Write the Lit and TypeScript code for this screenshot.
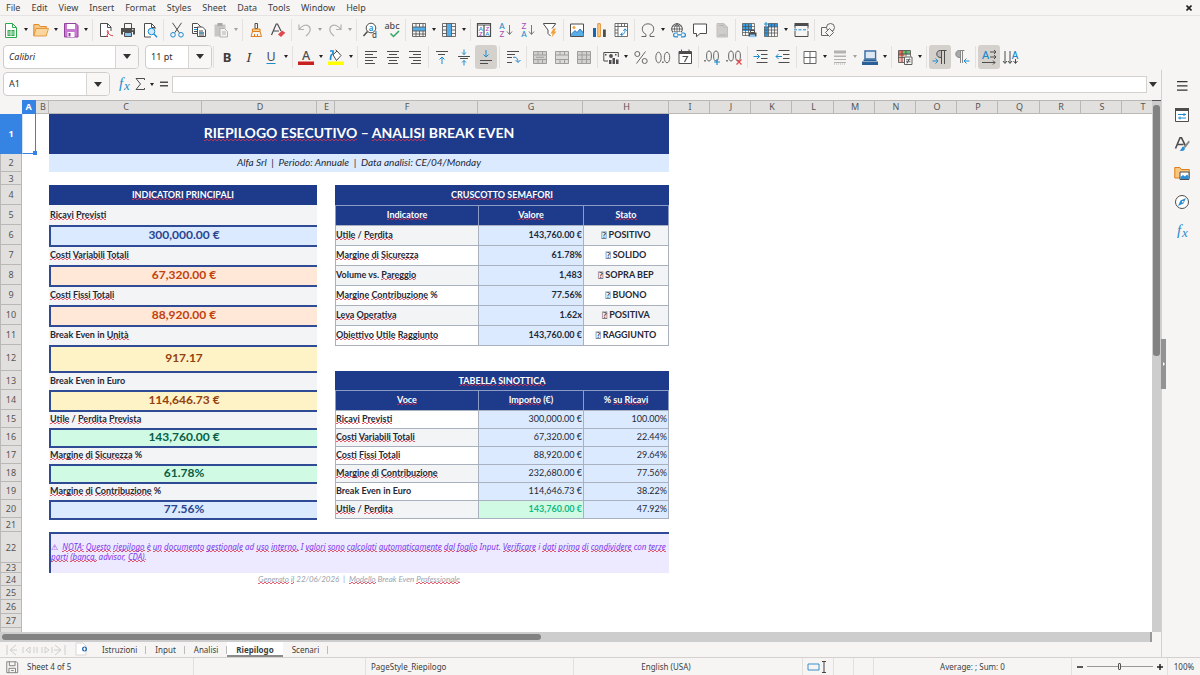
import { LitElement, html, svg, css, nothing } from "lit";
import { customElement, property } from "lit/decorators.js";
import { classMap } from "lit/directives/class-map.js";

const K = "#4d4d4d";
const B = "#1e8bcd";
const G = "#b4b2b0";

const line = (d: string, c = K, w = 1) =>
  svg`<path d=${d} fill="none" stroke=${c} stroke-width=${w}></path>`;
const fill = (d: string, c = K) => svg`<path d=${d} fill=${c}></path>`;
const glyph = (t: string, x: number, y: number, size: number, c = K, weight = 400, family = "Noto Sans", style = "normal") =>
  svg`<text x=${x} y=${y} font-size=${size} fill=${c} font-weight=${weight} font-style=${style} font-family=${family + ", sans-serif"} text-anchor="middle">${t}</text>`;

const icons: Record<string, unknown> = {
  new: [fill("M2.500 1.500h7l4 4v10h-11z", "#fff"), line("M2.500 1.500h7l4 4v10h-11zM9.500 1.500v4h4", "#2fa84f"), fill("M4.500 8h7v6h-7z", "#35a853"), line("M5 10h6M5 12h6M8 8v6", "#fff", 0.7)],
  open: [fill("M.8 14V2.500h5l1.500 2h6.500V14z", "#f7c67f"), line("M.8 14V2.500h5l1.500 2h6V6", "#e08a2c"), fill("M3 6.500h12.700L13.200 14H.8z", "#fbd69c"), line("M3 6.500h12.500L13.200 14H.8z", "#e08a2c", 0.8)],
  save: [fill("M1.500 1.500h11.500l2 2v11.500H1.500z", "#c77ad0"), line("M1.500 1.500h11.500l2 2v11.500H1.500z", "#91429c"), fill("M4 2h8v5H4zM4.500 10h7v5h-7z", "#fff"), fill("M5.500 11h2v3.500h-2z", "#91429c")],
  pdf: [fill("M2.500.8h7l4 4v10.700h-11z", "#fff"), line("M10 14.500H2.500V1.500h7l3.500 3.500v4M9.500 1.500v4H13"), line("M8 15c2-2 3-6 1.800-6.500S9 13 15 13.800", "#dd3c44")],
  print: [line("M4.500 6V1.500h7V6"), fill("M1 6h14v6.500h-2V10H3v2.500H1z", K), line("M4.500 10.500h7v4h-7z"), fill("M5 11h6v3H5z", "#8ec6ef"), fill("M12 7.200h1.500v1H12z", "#fff")],
  preview: [fill("M2.500.8h7l4 4v10.700h-11z", "#fff"), line("M9 15H2.500V1.500h7l3.500 3.500v2M9.500 1.500v4H13"), svg`<circle cx="9.500" cy="9.500" r="3.300" fill="#cfe8fa" stroke=${B}></circle>`, line("M12 12l3 3.300", B, 1.400)],
  cut: [line("M3.500.8l6.800 10M12.500.8l-6.800 10"), svg`<circle cx="4" cy="12.800" r="2.300" fill="none" stroke=${B}></circle><circle cx="12" cy="12.800" r="2.300" fill="none" stroke=${B}></circle>`],
  copy: [fill("M1.500 1.500h5l3 3v7h-8z", "#fff"), line("M1.500 1.500h5l3 3v7h-8zM3 5.500h4M3 7.500h4M3 9.500h3"), fill("M6.500 5h5l3.500 3.500v6.500H6.500z", "#fff"), line("M6.500 5h5l3 3v6.500h-8zM8 9h4M8 11h5M8 13h5"), line("M3 7.500h3M8 11h5", B)],
  paste: [fill("M1.500 2.500h11v12h-11z", "#c8c6c4"), fill("M4.500 1h5v3h-5z", "#a9a7a5"), fill("M7 6.500h5l3 3V15H7z", "#f4f3f2"), line("M7 6.500h4.500l3 3V15H7zM9 10h4M9 12h4", G)],
  clone: [line("M7 1.500h2.500v5H7z", K), fill("M3.500 7h9v3h-9z", "#fbd69c"), line("M4.500 7h7.500v2.500h-7.500zM4.500 9.500L3 14.500h10.500L12 9.500M6.500 14v-2M9.500 14v-2", "#df7f1f")],
  clear: [line("M1.500 13L6.200 2h1.300L11 9M3.500 9h5.500", K, 1.200), fill("M8 12.500l4-4 3.300 2.200-4.300 4.300z", "#e2474b")],
  undo: [line("M2 2.500v5h5M2.500 7C5 3.500 9 2.300 11.500 4c3.300 2.500 1.500 7-2.500 10", G, 1.200)],
  redo: [line("M14 2.500v5H9M13.500 7C11 3.500 7 2.300 4.500 4c-3.300 2.500-1.500 7 2.500 10", G, 1.200)],
  find: [svg`<circle cx="9" cy="6" r="4.800" fill="#fff" stroke=${K}></circle>`, line("M5.500 9.500L1.500 14", K, 1.500), glyph("a", 9, 8.500, 8, B, 600), glyph("d", 12.500, 15.500, 8, K, 500)],
  spell: [glyph("abc", 8, 7, 9, K, 500), line("M6.500 11.500l3 3L15 9", "#2fa865", 1.500)],
  row: [fill("M1.500 5h13v4h-13z", "#55aeea"), line("M1.500 1.500h13v13h-13zM1.500 5h13M1.500 9h13M1.500 12h13M5 1.500V5M8.500 1.500V5M12 1.500V5M5 9v5.500M8.500 9v5.500M12 9v5.500", K, 0.8)],
  col: [fill("M5.500 1.500h5v13h-5z", "#55aeea"), line("M1.500 1.500h13v13h-13zM5.500 1.500v13M10.500 1.500v13M1.500 4.500h4M1.500 8h4M1.500 11.500h4M10.500 4.500h4M10.500 8h4M10.500 11.500h4", K, 0.8)],
  sort: [fill("M1 1h14v14H1z", "#fff"), line("M1.500 1.500h13v13h-13zM8 3v12M1.500 3h13", K, 1.200), glyph("A", 4.800, 8.800, 6, B, 600, "Lato"), glyph("Z", 4.800, 14.300, 6, "#a94fb5", 600, "Lato"), glyph("Z", 11.300, 8.800, 6, "#a94fb5", 600, "Lato"), glyph("A", 11.300, 14.300, 6, B, 600, "Lato")],
  az: [glyph("A", 4, 7, 8, B, 500, "Lato"), glyph("Z", 4, 15, 8, "#a94fb5", 500, "Lato"), line("M11.500 3v9M9 9.500l2.500 3 2.500-3", "#777")],
  za: [glyph("Z", 4, 7, 8, "#a94fb5", 500, "Lato"), glyph("A", 4, 15, 8, B, 500, "Lato"), line("M11.500 3v9M9 9.500l2.500 3 2.500-3", "#777")],
  filter: [fill("M1.500 1.500h12L9.500 8v6.500l-3.500-3V8z", "#fff"), line("M8.500 14l-2.500-2.500V8L1.500 2v-.5h12V2L10 6.500"), fill("M11.500 6.500l-3 5h2.200L9.500 15.500l5-6h-2.200l1.700-3z", "#f3a13c")],
  image: [fill("M1 2h14v12.500H1z", "#fff"), line("M1.500 2h13v12.500h-13z"), svg`<circle cx="5" cy="5.500" r="1.500" fill="#f3a13c"></circle>`, fill("M2 14v-1.500l4-4 2 2L11 7l3.500 4V14z", "#5aaee8"), line("M2 12.500l4-4 2 2L11 7l3.500 4", "#1565b5", 0.8)],
  chart: [fill("M2 6h3v9H2z", "#1565b5"), fill("M7 2h2.500v13H7z", "#fbd69c"), line("M6.800 1.700h2.500v13H6.800z", "#e08a2c"), fill("M12 7.500h2.800V15H12z", K)],
  pivot: [fill("M2 1h13v14H2z", "#fff"), line("M2 1.500h12.500v13H2zM2 4.500h12.500M5 1.500v13M8.500 1.500v3M11.500 1.500v3M2 8h3M2 11h3", K, 0.8), line("M8 12.500c3.500 0 4-2 4-5M10.300 8.800L12 6.800l1.700 2M9.500 10.800l-2 1.700 2 1.500", B)],
  omega: [line("M1.500 14.500H6v-2C3.300 11 2.300 9 2.300 6.800 2.300 4 4.500 1.800 8 1.800s5.700 2.200 5.700 5c0 2.200-1 4.200-3.700 5.700v2h4.500", "#666", 1)],
  link: [svg`<circle cx="7" cy="7" r="5.300" fill="#fff" stroke=${K}></circle>`, line("M1.700 7h10.600M7 1.700v10.600M7 1.700c-3.500 3-3.500 7.600 0 10.600M7 1.700c3.500 3 3.500 7.600 0 10.600M2.500 4h9M2.500 10h9", K, 0.8), fill("M3 10h13v6H3z", "#f6f5f4"), line("M8 11H5.500a1.800 1.800 0 000 3.800H8M11 11h2.500a1.800 1.800 0 010 3.800H11M7 12.900h5", B, 1.200)],
  comment: [fill("M1.500 2h13v9.500H8l-3.500 3.500v-3.500h-3z", "#fff"), line("M1.500 2h13v9.500H8l-3.500 3.200v-3.200h-3z")],
  headers: [fill("M3 1h7l4 4v10H3z", "#cfcdcb"), line("M3 1.500h6.500l4 4v9.500H3zM9.500 1.500v4h4", "#c2c0be"), fill("M5 3h4v1H5zM5 12.500h7v1H5z", "#b4b2b0")],
  freezeprint: [fill("M1.500 1.500h9V9h-9z", "#3aa0e6"), line("M1.500 1.500h12v12h-12zM1.500 4.500h12M1.500 7.500h12M1.500 10.500h7M4.500 1.500v12M7.500 1.500v9M10.500 1.500V9", K, 0.7), fill("M7.500 10.500h8v4h-8z", K), fill("M9 12.500h5v2.700H9z", "#8ec6ef"), line("M9.500 8.500h4v2h-4z", K)],
  freeze: [fill("M1.500 4.500h4v10h-4zM5 1.500h9.500v3.500H5z", "#2e95e0"), line("M1.500 4.500V14.500h13v-13H5.500M1.500 5h13M1.500 8h13M1.500 11h13M5.500 1.500v13M8.500 1.500v13M11.500 1.500v13", K, 0.7), line("M3 0v4M1 2h4", B)],
  split: [fill("M1.500 1h14v3h-14z", K), line("M2 6.500V3M15 6.500V3M2 9v5.500h13V9", K), svg`<path d="M1 7.800h14" stroke=${B} stroke-dasharray="3 1.500"></path>`],
  shapes: [line("M1.500 5.500h7v8h-7z", "#666"), svg`<circle cx="10.500" cy="5.500" r="4" fill="#f6f5f4" stroke="#666"></circle><path d="M9.500 6.500l4 4-4 4-4-4z" fill="#f6f5f4" stroke="#666"></path>`],
  bold: glyph("B", 8, 13, 13, "#3d3d3d", 700),
  italic: glyph("I", 8, 13, 13, "#3d3d3d", 400, "Noto Serif, Liberation Serif", "italic"),
  underline: [glyph("U", 8, 12, 12.500, K, 400), line("M3.500 14.500h9", B)],
  fontcolor: [glyph("A", 8, 11, 12.500, K, 500), fill("M0 12.500h16v3.500H0z", "#c9211e")],
  highlight: [fill("M0 12.500h16v3.500H0z", "#ffff00"), fill("M5 6l4-4 4 5-4.500 4.500z", "#fff"), line("M5 5.800L9 2l4 4.500-4.500 5zM9 2L7.500.800"), line("M2 2h3v3c-2 0-2.500 3-2.500 6", B, 1.700)],
  left: line("M2 2.500h12M2 5.500h8M2 8.500h12M2 11.500h8M2 14.500h10"),
  center: line("M2 2.500h12M4 5.500h8M2 8.500h12M4 11.500h8M3 14.500h10"),
  right: line("M2 2.500h12M6 5.500h8M2 8.500h12M6 11.500h8M4 14.500h10"),
  top: [line("M2 2.500h12M4 5.500h7"), line("M8 15V8M5.500 10.500L8 8l2.500 2.500", B)],
  middle: [line("M2 7.500h12M4 9.500h8"), line("M8 .5v5M6 3.500l2 2 2-2M8 16.500v-5M6 13.500l2-2 2 2", B)],
  bottom: [line("M2 11.500h12M2 14.500h8"), line("M8 1v7M5.500 5.500L8 8l2.500-2.500", B)],
  wrap: [line("M2 2.500h12M2 5.500h8M2 8.500h5M2 13.500h5"), line("M8 8.500c3-1 5 1 5 4.500M10.500 11l2.500 2.500 2.500-2.500", B)],
  merge1: [fill("M1 2h14v13H1z", "#d3d1cf"), line("M1.500 2.500h13v12h-13zM1.500 6h13M1.500 10.500h13M6 2.500V6M10.500 2.500V6M6 10.500v4M10.500 10.500v4M4 8.300h8", "#a09e9c")],
  merge2: [fill("M1 2h14v13H1z", "#dcdad8"), line("M1.500 2.500h13v12h-13zM1.500 6h13M1.500 10.500h13M6 2.500V6M10.500 2.500V6M6 10.500v4M10.500 10.500v4", "#a09e9c")],
  merge3: [fill("M1 2h14v13H1z", "#d3d1cf"), line("M1.500 2.500h13v12h-13zM1.500 6h13M1.500 10.500h13M6 2.500v12M10.500 2.500v12", "#a09e9c")],
  currency: [line("M.8 12V3.500h14.500V8M.8 12H5"), svg`<circle cx="8" cy="7" r="1.900" fill=${K}></circle>`, fill("M2 5h1.500v1.500H2zM12 5h1.500v1.500H12zM6 11h2.500v4H6zM9.500 9h2.500v6H9.500zM13 10.500h2.500V15H13z", K)],
  percent: [svg`<circle cx="4.300" cy="5" r="2.500" fill="none" stroke="#666"></circle><circle cx="11.700" cy="12" r="2.500" fill="none" stroke="#666"></circle>`, line("M12.500 2.500l-9 12", "#666")],
  number: [svg`<ellipse cx="3.500" cy="8.500" rx="2.700" ry="5.300" fill="none" stroke="#666"></ellipse><ellipse cx="12" cy="8.500" rx="2.700" ry="5.300" fill="none" stroke="#666"></ellipse>`, fill("M7.200 12.500h1.300v1.500H7.200z", K)],
  date: [fill("M2 3h13v2.500H2z", K), fill("M2 5h13v9.500H2z", "#fff"), line("M2 2.500h12.500v12H2zM4.500.5v3M12 .5v3"), line("M5.500 7.500h5L7.500 13", K, 1.200)],
  adddec: [svg`<ellipse cx="5" cy="7" rx="2.400" ry="5" fill="none" stroke="#666"></ellipse><ellipse cx="12" cy="7" rx="2.400" ry="5" fill="none" stroke="#666"></ellipse>`, fill("M.3 11h1.400v1.500H.3z", K), line("M13 10v6M10 13h6", B, 1.200)],
  deldec: [svg`<ellipse cx="5" cy="7" rx="2.400" ry="5" fill="none" stroke="#666"></ellipse><ellipse cx="12" cy="7" rx="2.400" ry="5" fill="none" stroke="#666"></ellipse>`, fill("M.3 11h1.400v1.500H.3z", K), line("M10.500 10.500l5 5M15.500 10.500l-5 5", "#e2474b", 1.200)],
  indent: [line("M3.500 1.500h11M8 5.500h6.500M8 9.500h6.500M3.500 13.500h11"), line("M.5 7.500h6M4 5l2.500 2.500L4 10", B)],
  outdent: [line("M3.500 1.500h11M8 5.500h6.500M8 9.500h6.500M3.500 13.500h11"), line("M7 7.500H1M3.500 5L1 7.500 3.500 10", B)],
  borders: [fill("M2 2h12v12H2z", "#fff"), line("M2 2.500h12v12H2zM8 2.500v12M2 8.500h12", "#666")],
  borderstyle: [fill("M2 1.500h12v3H2zM2 6.500h12V8H2zM2 10h12v1H2z", G), line("M2 13.500h12", G), svg`<path d="M2 15h12" stroke=${G} stroke-dasharray="1 1"></path>`],
  bordercolor: [fill("M0 12.500h16v3.500H0z", "#2a6099"), line("M3 2h10.500v8H3z", "#3a6ea5", 1.500), fill("M4 3h8.500v6H4z", "#dce9f5"), fill("M1.500 10.500h13v1.500h-13z", "#2a6099")],
  cond: [fill("M1.500 1.500h6v6h-6z", "#ef6e5a"), fill("M6 1.500h7v4H6z", "#5fbf6c"), fill("M1.500 8h5v5.500h-5z", "#f8b3a6"), line("M1.500 1.500h12v12h-12zM1.500 5h12M1.500 8.500h12M5 1.500v12M9 1.500v12", K, 0.8), fill("M7 7.500h8.500v8.500H7z", "#fff"), line("M7.500 8h7.500v7.500H7.500zM9 10.800h4.500M9 12.800h4.500M12.500 9.500l-2.500 5", K, 0.9)],
  ltr: [fill("M9 1.500v7C6 8.500 4.800 7 4.800 5S6 1.500 9 1.500z", "#bbb"), line("M14.500 1.500H8.500C6 1.500 4.800 3 4.800 5S6 8.500 9 8.500M9.500 1.500V15M12.500 1.500V15"), line("M.5 12h5.500M3.500 9.500L6 12l-2.500 2.500", B)],
  rtl: [fill("M7 1.500v7C3 8.500 1.800 7 1.800 5S3 1.500 7 1.500z", "#aaa"), line("M10.500 1.500H5.500C3 1.500 1.800 3 1.800 5S3 8.500 6 8.500M6.500 1.500V14M8.500 1.500V14", "#8a8886"), line("M15.500 12H10M12.500 9.500L10 12l2.500 2.500", B)],
  dirh: [glyph("A", 4.500, 9.500, 11, B, 500), line("M9 3h6M13 1l2 2-2 2M9 8h6M13 6l2 2-2 2M1 13.500h13M12 11.500l2 2-2 2")],
  dirv: [line("M2 2v12M0 12l2 2.500L4 12M7 2v12M5 12l2 2.500L9 12M12.500 10v4M10.500 12l2 2.500 2-2.500"), glyph("A", 12, 9.500, 10, B, 500)],
  fx: [glyph("f", 5, 12, 15, B, 400, "Liberation Serif", "italic"), glyph("x", 11, 14, 13, B, 400, "Liberation Serif", "italic")],
  sum: line("M12.500 4V2.500H4l4.500 5.500L4 13.500h8.500V12", K, 1),
  equals: fill("M4 5.500h8v1.500H4zM4 9h8v1.500H4z", K),
  menu: fill("M3 3h10.500v1.300H3zM3 7.300h10.500v1.300H3zM3 11.500h10.500v1.300H3z", "#333"),
  props: [fill("M1.500 1.500h13v13h-13z", "#fff"), line("M1.500 1.500h13v13h-13z"), fill("M1 1h14v3H1z", K), line("M4 7.500h8M4 11h8M10 6v3M6 9.500v3", B)],
  styles: [line("M1.500 12.500L6 1.800h1.500l4 8M3.500 8.500h6", K, 1.600), fill("M14.800 4.500l-5 6 1.500 1.500 4.500-6z", "#888"), fill("M9.500 10.500c-2 0-1.500 3-4 4 3 1.200 5.500 0 5.500-2.500z", "#2b8fd6")],
  gallery: [fill("M.5 13V2h5l1.500 2h8.500v9z", "#f7c67f"), line("M.8 13V2.500h5l1.500 2h8V13z", "#df7f1f"), fill("M6 7h9v8H6z", "#fff"), line("M6 7h9v7.500H6z", K), fill("M6.500 14v-2l2.500-2 2 1.500 2-2 1.700 2V14z", "#2b8fd6")],
  navigator: [svg`<circle cx="8" cy="8" r="6.500" fill="#fff" stroke=${K}></circle>`, fill("M12 4L9.500 9.500 4 12l2.500-5.500z", "#2b8fd6"), fill("M8 7h1.500v1.500H8z", "#fff")],
  disk: [line("M2 2h11l1.500 1.500V14.500H2zM5 2v4.500h6.500V2M4.500 14.500v-5h7.500v5M7 12h3", "#777")],
};

const icon = (name: string) =>
  html`<svg class="icon" viewBox="0 0 16 16" aria-hidden="true">${icons[name]}</svg>`;

/* Underscores enclose the words that the spell checker flags. */
const spell = (text: string) =>
  text.split("_").map((part, i) => (i % 2 ? html`<span class="sp">${part}</span>` : part));

type Tool = string;

/* Suffixes: "+" adds a drop-down arrow, "!" is pressed, "~" is disabled; "|" separates. */
const standardTools: Tool[] = "new+ open+ save+ | pdf print preview | cut copy paste+~ | clone clear | undo+~ redo+~ | find spell | row+ col+ | sort az za filter | image chart pivot | omega+ link comment headers~ | freezeprint freeze+ split | shapes".split(" ");
const formatTools: Tool[] = "| bold italic underline+ | fontcolor+ highlight+ | left center right | top middle bottom! | wrap | merge1~ merge2~ merge3~ | currency+ percent number date | adddec deldec | indent outdent | borders+ borderstyle+~ bordercolor+ | cond+ | ltr! rtl | dirh! dirv".split(" ");

const base = css`
  * { box-sizing: border-box; }
  button, input {
    font: inherit;
    color: inherit;
    margin: 0;
    padding: 0;
    border: 0;
    background: none;
    min-width: 0;
  }
  .icon { width: 16px; height: 16px; display: block; flex: none; overflow: visible; }
  .arrow {
    width: 0;
    height: 0;
    border: 2px solid transparent;
    border-top: 3px solid #222;
    border-bottom: 0;
  }
  .arrow.big { border-width: 5px 4px 0; border-top-color: #333; }
`;

@customElement("tool-bar")
class ToolBar extends LitElement {
  @property({ attribute: false }) tools: Tool[] = [];

  static styles = [base, css`
    :host { display: flex; align-items: center; }
    .tool { width: 22px; height: 24px; display: grid; place-items: center; border-radius: 3px; }
    .tool.pressed { background: #d4d0cc; }
    .more { width: 8px; height: 24px; display: grid; place-items: center; }
    .off .arrow { opacity: 0.4; }
    .sep { width: 1px; height: 22px; margin: 0 2px; background: #e3e1df; }
  `];

  render() {
    return this.tools.map((t) => {
      if (t === "|") return html`<span class="sep"></span>`;
      const name = t.replace(/[+!~]/g, "");
      const off = t.includes("~");
      return html`
        <button class=${classMap({ tool: true, pressed: t.includes("!") })} aria-label=${name} ?disabled=${off}>${icon(name)}</button>
        ${t.includes("+")
          ? html`<button class=${classMap({ more: true, off })} aria-label="${name} options"><span class="arrow"></span></button>`
          : nothing}`;
    });
  }
}

@customElement("combo-field")
class ComboField extends LitElement {
  @property() label = "";
  @property() value = "";
  @property({ type: Boolean }) slanted = false;

  static styles = [base, css`
    :host { display: flex; height: 24px; border: 1px solid #cfccc9; border-radius: 4px; background: #fff; overflow: hidden; font-size: 9px; color: #2e2e2e; }
    input { flex: 1; padding-left: 5px; outline: 0; }
    .slanted { font-style: italic; }
    button { width: 23px; flex: none; display: grid; place-items: center; border-left: 1px solid #d8d5d2; background: #f8f7f6; }
  `];

  render() {
    return html`
      <input class=${classMap({ slanted: this.slanted })} aria-label=${this.label} .value=${this.value} />
      <button aria-label="Open ${this.label}"><span class="arrow big"></span></button>`;
  }
}

const columns: [string, number][] = [
  ["A", 14], ["B", 13], ["C", 153], ["D", 115], ["E", 18], ["F", 143], ["G", 105], ["H", 86],
  ["I", 41], ["J", 41], ["K", 41], ["L", 42], ["M", 41], ["N", 41], ["O", 41], ["P", 41], ["Q", 42], ["R", 41], ["S", 41],
  ["T", 41],
];

const gap = (n: number) => html`<td colspan=${n}></td>`;
const label = (t: string, first = false) =>
  html`<td colspan="2" class=${classMap({ lab: true, ruled: !first, lift: !first })}>${spell(t)}</td>`;
const kpi = (t: string, tone: string) => html`<td colspan="2" class="kpi lift ${tone}">${t}</td>`;
const section = (t: string) => html`<td colspan="3" class="section">${spell(t)}</td>`;
const heads = (a: string, b: string, c: string) =>
  html`${[a, b, c].map((t, i) => html`<th scope="col" class=${classMap({ head: true, lift: true, last: i === 2 })}>${spell(t)}</th>`)}`;
const status = (name: string, value: string, state: string, alt: boolean) => html`
  <td class=${classMap({ box: true, lift: true, name: true, alt })}>${spell(name)}</td>
  <td class="box lift num strong">${value}</td>
  <td class=${classMap({ box: true, lift: true, state: true, last: true, alt })}><span class="missing">⍰</span> ${state}</td>`;
const summary = (name: string, value: string, share: string, alt: boolean, good = false) => html`
  <td class=${classMap({ box: true, lift: true, name: true, alt })}>${spell(name)}</td>
  <td class=${classMap({ box: true, lift: true, num: true, good })}>${value}</td>
  <td class="box lift num last">${share}</td>`;
const cap = html`<td colspan="3" class="cap"></td>`;

const rows: [number, unknown][] = [
  [40, html`<td class="cursor"><span class="handle"></span></td>${gap(1)}<td colspan="6" class="title lift">${spell("_RIEPILOGO_ _ESECUTIVO_ – _ANALISI_ BREAK EVEN")}</td>`],
  [18, html`${gap(2)}<td colspan="6" class="subtitle lift">Alfa Srl &nbsp;|&nbsp; Periodo: Annuale &nbsp;|&nbsp; Data analisi: CE/04/Monday</td>`],
  [13, gap(8)],
  [20, html`${gap(2)}<td colspan="2" class="section">${spell("_INDICATORI_ _PRINCIPALI_")}</td>${gap(1)}${section("_CRUSCOTTO_ _SEMAFORI_")}`],
  [20, html`${gap(2)}${label("_Ricavi_ _Previsti_", true)}${gap(1)}${heads("_Indicatore_", "_Valore_", "_Stato_")}`],
  [20, html`${gap(2)}${kpi("300,000.00 €", "blue")}${gap(1)}${status("_Utile_ / _Perdita_", "143,760.00 €", "POSITIVO", true)}`],
  [20, html`${gap(2)}${label("_Costi_ _Variabili_ _Totali_")}${gap(1)}${status("_Margine_ _di_ _Sicurezza_", "61.78%", "SOLIDO", false)}`],
  [20, html`${gap(2)}${kpi("67,320.00 €", "orange")}${gap(1)}${status("Volume vs. _Pareggio_", "1,483", "SOPRA BEP", true)}`],
  [20, html`${gap(2)}${label("_Costi_ _Fissi_ _Totali_")}${gap(1)}${status("_Margine_ _Contribuzione_ %", "77.56%", "BUONO", false)}`],
  [20, html`${gap(2)}${kpi("88,920.00 €", "orange")}${gap(1)}${status("_Leva_ _Operativa_", "1.62x", "POSITIVA", true)}`],
  [20, html`${gap(2)}${label("Break Even in _Unità_")}${gap(1)}${status("_Obiettivo_ _Utile_ _Raggiunto_", "143,760.00 €", "RAGGIUNTO", false)}`],
  [26, html`${gap(2)}${kpi("917.17", "yellow")}${gap(1)}${cap}`],
  [19, html`${gap(2)}${label("Break Even in Euro")}${gap(1)}${section("_TABELLA_ _SINOTTICA_")}`],
  [20, html`${gap(2)}${kpi("114,646.73 €", "yellow")}${gap(1)}${heads("_Voce_", "_Importo_ (€)", "% _su_ _Ricavi_")}`],
  [18, html`${gap(2)}${label("_Utile_ / _Perdita_ _Prevista_")}${gap(1)}${summary("_Ricavi_ _Previsti_", "300,000.00 €", "100.00%", false)}`],
  [18, html`${gap(2)}${kpi("143,760.00 €", "green")}${gap(1)}${summary("_Costi_ _Variabili_ _Totali_", "67,320.00 €", "22.44%", true)}`],
  [18, html`${gap(2)}${label("_Margine_ _di_ _Sicurezza_ %")}${gap(1)}${summary("_Costi_ _Fissi_ _Totali_", "88,920.00 €", "29.64%", false)}`],
  [18, html`${gap(2)}${kpi("61.78%", "green")}${gap(1)}${summary("_Margine_ _di_ _Contribuzione_", "232,680.00 €", "77.56%", true)}`],
  [18, html`${gap(2)}${label("_Margine_ _di_ _Contribuzione_ %")}${gap(1)}${summary("Break Even in Euro", "114,646.73 €", "38.22%", false)}`],
  [18, html`${gap(2)}${kpi("77.56%", "blue")}${gap(1)}${summary("_Utile_ / _Perdita_", "143,760.00 €", "47.92%", true, true)}`],
  [14, html`${gap(2)}<td colspan="2" class="ruled"></td>${gap(1)}${cap}`],
  [31, html`${gap(2)}<td colspan="6" rowspan="2" class="note"><span class="warn">⚠</span>&nbsp; ${spell("_NOTA:_ _Questo_ _riepilogo_ _è_ _un_ _documento_ _gestionale_ ad _uso_ _interno._ I _valori_ _sono_ _calcolati_ _automaticamente_ _dal_ _foglio_ Input. _Verificare_ i _dati_ _prima_ _di_ _condividere_ con _terze_ _parti_ _(banca,_ advisor, _CDA)_.")}</td>`],
  [10, gap(2)],
  [13, html`${gap(2)}<td colspan="6" class="made lift">${spell("_Generato_ _il_ 22/06/2026")} &nbsp;|&nbsp; ${spell("_Modello_ Break Even _Professionale_")}</td>`],
  [14, gap(8)],
  [14, gap(8)],
  [14, gap(8)],
];

@customElement("sheet-grid")
class SheetGrid extends LitElement {
  static styles = [base, css`
    :host { display: block; overflow: hidden; background: #fff; }
    table { table-layout: fixed; width: 1px; border-collapse: separate; border-spacing: 0; font-family: Lato, sans-serif; font-size: 9px; line-height: 10px; color: #1f2937; }
    .rowcol { width: 22px; }
    td, th { padding: 0; vertical-align: middle; }
    .lift { padding-bottom: 2px; }
    .colhead, .rowhead, .corner { font: 400 9px/10px "Noto Sans", sans-serif; color: #555; background: #e2e0de; border: 0 solid #bab8b6; text-align: center; }
    .colhead { height: 14px; padding-left: 2px; border-right-width: 1px; border-top-width: 1px; border-bottom-width: 1px; }
    .rowhead { line-height: 9px; border-right-width: 1px; border-bottom-width: 1px; border-left-width: 1px; }
    .corner { background: #f6f5f4; }
    .active { background: #3584e4; border-color: #3584e4; color: #fff; font-weight: 700; }
    .colhead.active { padding-left: 0; }
    .cursor { position: relative; border: 1px solid #3584e4; border-top: 0; border-left-color: #cfe0f7; }
    .handle { position: absolute; right: -2px; bottom: -2px; width: 4px; height: 4px; background: #3584e4; }
    .title { background: #1e3a8a; color: #fff; text-align: center; font-size: 14px; line-height: 18px; font-weight: 700; }
    .subtitle { background: #dbeafe; text-align: center; font-style: italic; font-size: 10px; }
    .section, .head { background: #1e3a8a; color: #fff; text-align: center; font-weight: 700; }
    .head { border: 0 solid #8d9cc4; border-top-width: 1px; border-left-width: 1px; }
    .lab { background: #f3f4f6; font-weight: 700; padding-left: 1px; }
    .ruled { border-top: 2px solid #2f4b96; }
    .kpi { border: 0 solid #2f4b96; border-top-width: 2px; border-left-width: 2px; text-align: center; font-size: 12px; line-height: 14px; font-weight: 700; }
    .blue { background: #dbeafe; color: #2a4590; }
    .orange { background: #ffe8d8; color: #c2410c; }
    .yellow { background: #fef3c7; color: #92400e; }
    .green { background: #d1fae5; color: #065f46; }
    .box { border: 0 solid #a9b0be; border-top-width: 1px; border-left-width: 1px; }
    .last { border-right-width: 1px; }
    .cap { border-top: 1px solid #a9b0be; }
    .name { font-weight: 700; }
    .alt { background: #f3f4f6; }
    .num { background: #dbeafe; text-align: right; padding-right: 1px; }
    .strong, .state { font-weight: 700; }
    .state { text-align: center; }
    .good { background: #d1fae5; color: #10b981; font-weight: 700; }
    .missing { font: 400 8px/8px "DejaVu Sans Mono", monospace; }
    .note { background: #ede9fe; color: #7c3aed; font-family: "Noto Sans", sans-serif; font-style: italic; font-size: 8px; line-height: 9px; border-top: 2px solid #2f4b96; border-left: 2px solid #2f4b96; padding-bottom: 4px; }
    .warn { font-family: "DejaVu Sans", sans-serif; font-style: normal; }
    .made { color: #9ca3af; text-align: center; font-style: italic; font-size: 8px; }
    .sp {
      background:
        linear-gradient(90deg, #e0354bcc 2px, transparent 2px) 0 100% / 4px 1px repeat-x,
        linear-gradient(90deg, transparent 2px, #e0354bcc 2px) 0 calc(100% - 1px) / 4px 1px repeat-x;
    }
  `];

  render() {
    return html`
      <table>
        <colgroup>
          <col class="rowcol" />
          ${columns.map(([, w]) => html`<col style="width:${w}px" />`)}
        </colgroup>
        <thead>
          <tr>
            <td class="corner"></td>
            ${columns.map(([n], i) => html`<th scope="col" class=${classMap({ colhead: true, active: i === 0 })}>${n}</th>`)}
          </tr>
        </thead>
        <tbody>
          ${rows.map(([h, cells], i) => html`
            <tr style="height:${h}px">
              <th scope="row" class=${classMap({ rowhead: true, active: i === 0 })}>${i + 1}</th>
              ${cells}
            </tr>`)}
          <tr><td class="rowhead">&nbsp;</td></tr>
        </tbody>
      </table>`;
  }
}

@customElement("app-root")
class AppRoot extends LitElement {
  static styles = [base, css`
    :host { display: flex; flex-direction: column; height: 100vh; overflow: hidden; background: #f6f5f4; color: #3d3d3d; font-family: "Noto Sans", sans-serif; font-size: 9px; line-height: 12px; }
    .menubar { display: flex; align-items: center; height: 16px; padding: 0 8px 0 6px; gap: 11px; border-bottom: 1px solid #e6e4e2; flex: none; }
    .close { margin-left: auto; }
    .close svg { width: 6px; height: 6px; display: block; }
    .bar { display: flex; align-items: center; height: 27px; flex: none; }
    .format { gap: 6px; padding-left: 3px; }
    .fontname { width: 136px; }
    .fontsize { width: 67px; }
    .format tool-bar { margin-left: -7px; }
    .work { flex: 1; display: flex; min-height: 0; }
    .doc { flex: 1; min-width: 0; display: flex; flex-direction: column; border-right: 1px solid #d3d0ce; }
    .formula { display: flex; align-items: center; height: 30px; padding: 0 4px 2px 3px; flex: none; }
    .namebox { width: 107px; margin-right: 6px; }
    .formula .arrow { margin: 0 2px; }
    .line { flex: 1; height: 17px; border: 1px solid #d3d0ce; background: #fff; }
    .formula .expand { margin: 0 0 0 2px; }
    .view { flex: 1; display: flex; min-height: 0; }
    sheet-grid { flex: 1; min-width: 0; }
    .vtrack { width: 9px; background: #cdcdcd; padding: 4px 1px; border-top: 1px solid #555; }
    .vthumb { height: 48%; border-radius: 3px; background: #828282; }
    .htrack { height: 10px; flex: none; background: #cdcdcd; padding: 2px; margin-right: 9px; border-right: 2px solid #999; }
    .hthumb { width: 47%; height: 6px; border-radius: 3px; background: #828282; }
    .tabs { display: flex; align-items: stretch; height: 16px; flex: none; padding-left: 6px; font-size: 8px; border-bottom: 1px solid #d3d0ce; }
    .nav { width: 60px; height: 14px; align-self: center; margin-right: 9px; }
    .addtab { width: 14px; height: 14px; margin-right: 4px; }
    .addtab svg { width: 14px; height: 14px; display: block; }
    .tab { padding: 0 9px; position: relative; }
    .tab::after { content: ""; position: absolute; right: 0; top: 4px; height: 8px; width: 1px; background: #bbb; }
    .tab.on { background: #fff; font-weight: 700; border-bottom: 2px solid #8b8b8b; padding-top: 2px; }
    .tab.on::after { display: none; }
    .side { width: 38px; position: relative; display: flex; flex-direction: column; align-items: center; gap: 13px; padding: 8px 0 0 2px; border-bottom: 1px solid #d3d0ce; }
    .grip { position: absolute; left: -1px; top: 269px; width: 5px; height: 50px; background: #919394; display: grid; place-items: center; }
    .grip::after { content: ""; border: 2px solid transparent; border-left-color: #fff; border-right: 0; }
    .status { display: grid; grid-template-columns: 193fr 172fr 208fr 185fr 44fr 31fr 20fr 20fr 198fr 96fr 33fr; height: 17px; flex: none; font-size: 8px; }
    .status > * { display: flex; align-items: center; justify-content: center; border-left: 1px solid #e3e1df; min-width: 0; }
    .status > .start { justify-content: flex-start; padding-left: 5px; gap: 8px; }
    .status > .plain { border-left: 0; }
    .status .icon { width: 14px; height: 14px; }
    .zoom { gap: 3px; }
    .zoom svg { width: 8px; height: 8px; display: block; }
    input[type="range"] { appearance: none; width: 66px; height: 9px; background: linear-gradient(#9a9896, #9a9896) 0 50% / 100% 1px no-repeat; }
    input[type="range"]::-webkit-slider-thumb { appearance: none; width: 3px; height: 7px; border: 1px solid #555; border-radius: 1px; background: #eee; }
  `];

  render() {
    return html`
      <nav class="menubar">
        ${["File", "Edit", "View", "Insert", "Format", "Styles", "Sheet", "Data", "Tools", "Window", "Help"].map((m) => html`<button>${m}</button>`)}
        <button class="close" aria-label="Close document"><svg viewBox="0 0 6 6"><path d="M.5.5l5 5M5.500.5l-5 5" stroke="#222" stroke-width="1.600"></path></svg></button>
      </nav>
      <div class="bar"><tool-bar .tools=${standardTools}></tool-bar></div>
      <div class="bar format">
        <combo-field class="fontname" label="Font name" value="Calibri" slanted></combo-field>
        <combo-field class="fontsize" label="Font size" value="11 pt"></combo-field>
        <tool-bar .tools=${formatTools}></tool-bar>
      </div>
      <main class="work">
        <div class="doc">
          <div class="formula">
            <combo-field class="namebox" label="Name box" value="A1"></combo-field>
            <button aria-label="Function wizard">${icon("fx")}</button>
            <button aria-label="Select function">${icon("sum")}</button>
            <span class="arrow"></span>
            <button aria-label="Formula">${icon("equals")}</button>
            <input class="line" aria-label="Input line" />
            <span class="arrow big expand"></span>
          </div>
          <div class="view">
            <sheet-grid></sheet-grid>
            <div class="vtrack"><div class="vthumb"></div></div>
          </div>
          <div class="htrack"><div class="hthumb"></div></div>
          <div class="tabs">
            <svg class="nav" viewBox="0 0 60 14" fill="none" stroke="#d0cecc">
              <path d="M1 2v10M10 2L4 7l6 5M4 7h7M17 4v6M24 4l-4 3 4 3zM28 4v6M31 4v6M36 4v6M39 4l4 3-4 3zM46 4v6M49 2l6 5-6 5M48 7h7M59 2v10"></path>
            </svg>
            <button class="addtab" aria-label="Add sheet"><svg viewBox="0 0 14 14"><path d="M1 1h7l3 3v9H1z" fill="#fff" stroke="#d9d7d5"></path><circle cx="9.500" cy="7" r="2.500" fill="#2469b3"></circle><path d="M9.500 5.500v3M8 7h3" stroke="#fff"></path></svg></button>
            ${["Istruzioni", "Input", "Analisi", "Riepilogo", "Scenari"].map((t) => html`<button class=${classMap({ tab: true, on: t === "Riepilogo" })}>${t}</button>`)}
          </div>
        </div>
        <aside class="side">
          ${["menu", "props", "styles", "gallery", "navigator", "fx"].map((n) => html`<button aria-label=${n}>${icon(n)}</button>`)}
          <span class="grip"></span>
        </aside>
      </main>
      <footer class="status">
        <span class="start plain">${icon("disk")} Sheet 4 of 5</span>
        <span></span>
        <span class="start">PageStyle_Riepilogo</span>
        <span>English (USA)</span>
        <span class="plain"></span>
        <span><svg width="22" height="12" viewBox="0 0 22 12" fill="none"><path d="M1 3h11v6H1z" stroke="#3a8fc8"></path><path d="M15 .5h4M15 11.500h4M17 .5v11" stroke="#444"></path></svg></span>
        <span></span>
        <span></span>
        <span>Average: ; Sum: 0</span>
        <span class="zoom">
          <button aria-label="Zoom out"><svg viewBox="0 0 8 8"><path d="M1 4h6" stroke="#222" stroke-width="1.500"></path></svg></button>
          <input type="range" aria-label="Zoom" min="0" max="100" value="50" />
          <button aria-label="Zoom in"><svg viewBox="0 0 8 8"><path d="M1 4h6M4 1v6" stroke="#222" stroke-width="1.500"></path></svg></button>
        </span>
        <span>100%</span>
      </footer>`;
  }
}
